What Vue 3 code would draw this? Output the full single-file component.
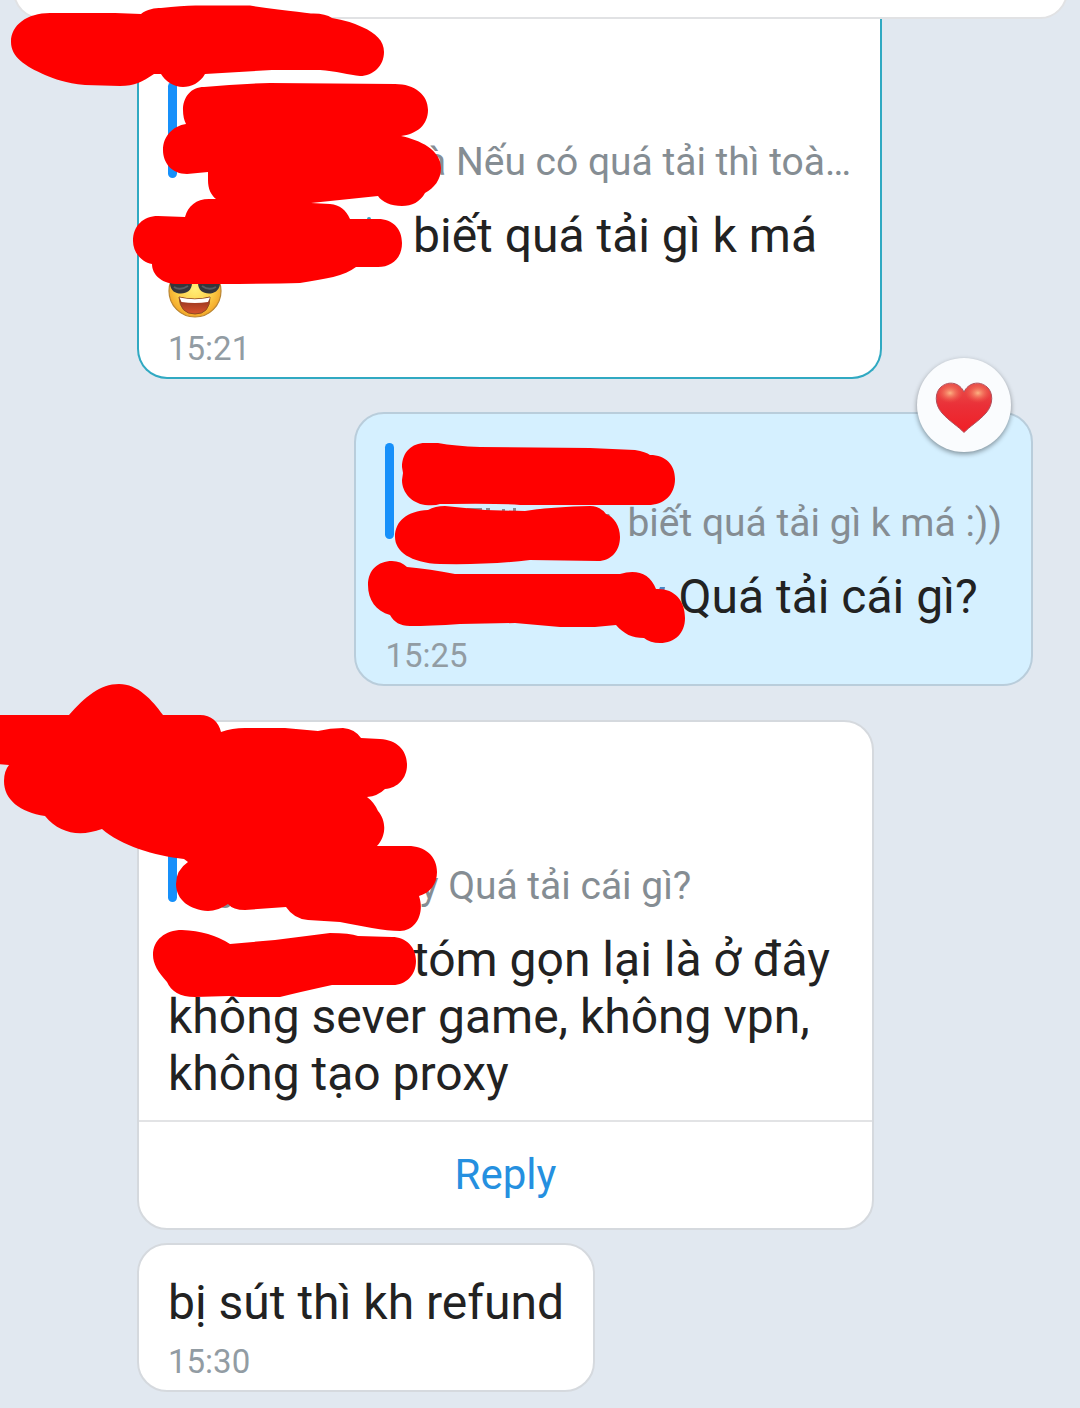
<script setup>
const marks = {
  first: [
    'M11,42 C11,25 27,13 50,13 L115,13 L141,14 C147,9 155,8 161,8 Q185,5 200,5.5 L250,5.5 Q265,8 278,9.5 Q300,12 311,13.5 Q325,13 332,18 Q350,21 362,27 C376,33 384,41 384,52 C384,66 373,76 360,76 C350,75 335,71 320,70 L272,70 L205,74 C200,83 191,87 183,87 C174,87 165,81 161,74 L154,74 C142,82 135,86 120,86 L85,85 C65,83 55,79 45,75 C25,66 11,57 11,42Z',
    'M183,110 C183,97 191,87 204,87 Q235,84 270,83 L395,84 C415,84 428,95 428,110 C428,125 417,134 401,136 C420,140 441,150 441,168 C441,180 434,188 425,193 C420,202 412,206 402,206 C391,206 382,202 378,196 L311,203 L330,204 C340,205 346,210 350,219 L378,219 C393,219 402,229 402,243 C402,258 392,267 378,267 L356,267 C345,276 325,279 300,283 Q265,284 175,284 C162,283 152,275 152,264 C141,262 133,252 133,241 C133,226 143,216 158,216 L185,217 C188,206 196,199 209,199 L216,199 C211,195 208,189 208,180 L208,172 L187,174 C172,174 163,163 163,150 C163,136 173,126 186,124 Q183,118 183,110Z',
  ],
  second: [
    'M402,467 C402,452 412,443 425,443 L438,443 Q455,446 480,447 L590,448 L635,450 Q646,452 650,455 C666,455 675,465 675,479 C675,495 664,505 648,505 L520,505 Q500,503 440,504 Q435,506 425,505 C412,503 402,493 402,480 L403,473Z',
    'M395,537 C395,521 407,511 428,510 Q435,506 445,506 L485,510 L525,511 Q550,507 590,506 Q600,506 606,514 C614,517 620,526 620,537 C620,551 611,561 598,561 L530,560 Q490,565 440,564 C410,563 395,551 395,537Z',
    'M368,585 C368,570 378,561 392,561 Q401,561 407,567 Q430,569 455,574 L620,574 C636,569 650,573 656,589 C674,588 685,600 685,618 C685,633 675,643 660,643 Q650,643 644,638 C632,638 624,634 616,625 L595,627 L560,627 L515,623 L460,624 Q430,626 410,626 C400,626 394,622 390,615 C376,611 368,600 368,585Z',
  ],
  third: [
    'M-2,715 L69,715 C85,697 100,684 119,684 C138,684 152,700 163,715 L200,715 C211,715 219,722 221,732 Q232,728 245,728 L285,728 L318,731 Q330,728 343,728 Q355,729 361,738 L380,739 C397,740 407,750 407,765 C407,778 398,788 385,789 Q378,796 367,797 Q374,802 378,811 C386,820 387,835 377,846 L408,846 C425,846 437,856 437,872 C437,884 430,893 419,896 C425,913 416,931 400,931 C385,931 360,926 340,922 L308,920 Q294,919 286,907 L245,910 Q233,910 228,904 Q218,911 208,911 C190,910 176,900 176,884 Q176,870 188,862 L184,859 C155,856 120,845 102,829 C80,837 60,834 45,816 C20,812 4,800 4,781 Q4,771 9,765 L-2,764Z',
    'M153,955 C153,940 165,930 182,930 Q210,931 230,944 L275,940 L330,933 Q350,933 358,936 L392,937 C406,937 416,947 416,961 C416,975 406,985 393,985 L332,985 Q300,992 280,997 L240,997 L229,996 L195,997 C180,997 171,991 167,982 C158,972 153,964 153,955Z',
  ],
}
</script>

<template>
  <main class="chat">
    <header class="sheet-wrap"><div class="sheet"></div></header>

    <article class="bubble selected">
      <blockquote class="quote">
        <p><span class="hidden q1"></span>à Nếu có quá tải thì toà…</p>
      </blockquote>
      <p class="text"><span class="hidden t1"></span>biết quá tải gì k má</p>
      <div class="emoji-line">
        <svg class="emoji" viewBox="0 0 54 54" aria-label="Laughing face with sunglasses">
          <defs>
            <radialGradient id="face" cx="50%" cy="45%" r="55%">
              <stop offset="0" stop-color="#fff07a" />
              <stop offset="0.6" stop-color="#fdd04a" />
              <stop offset="1" stop-color="#f3a526" />
            </radialGradient>
            <linearGradient id="mouth" x1="0" y1="0" x2="0" y2="1">
              <stop offset="0" stop-color="#8a2f1c" />
              <stop offset="1" stop-color="#d9532c" />
            </linearGradient>
          </defs>
          <circle cx="27" cy="27" r="26" fill="url(#face)" stroke="#b98532" stroke-width="1.2" />
          <path d="M2 13H52V20C51 27 46 29.500 41 29.500C35 29.500 30 26 30 19H24C24 26 19 29.500 13 29.500C7 29.500 3 27 2 20Z" fill="#34363b" />
          <path d="M6 23Q12 27 20 22M34 22Q41 27 48 23" fill="none" stroke="#595b61" stroke-width="2" />
          <path d="M11 33Q27 37 42 33Q42 50 27 50Q12 50 11 33Z" fill="url(#mouth)" stroke="#8f4a20" />
          <path d="M11.500 33.500Q27 37 42 33.500L40 38Q27 40 13.500 38Z" fill="#fff" />
        </svg>
      </div>
      <time class="time">15:21</time>
      <svg class="marks" viewBox="139 19 10 10" aria-hidden="true">
        <circle cx="369" cy="219" r="2" fill="#3c9dbd" />
        <path v-for="d in marks.first" :key="d" :d="d" />
      </svg>
    </article>

    <article class="bubble own">
      <blockquote class="quote">
        <p><span class="hidden q2"></span>biết quá tải gì k má :))</p>
      </blockquote>
      <p class="text"><span class="hidden t2"></span>Quá tải cái gì?</p>
      <time class="time">15:25</time>
      <svg class="marks" viewBox="356 414 10 10" aria-hidden="true">
        <path class="grey" d="M467 508h15v3h-15zM486 508h4v4h-4zM502 509h3v3h-3zM513 508h3v3h-3zM603 514h6l3 5h-6z" />
        <path fill="#4a86c4" d="M660 587h5l-1 5h-6z" />
        <path v-for="d in marks.second" :key="d" :d="d" />
      </svg>
      <button class="reaction" type="button" aria-label="Love">
        <svg viewBox="0 0 58 52" aria-hidden="true">
          <defs>
            <linearGradient id="heart" x1="0" y1="0" x2="0" y2="1">
              <stop offset="0" stop-color="#e8514a" />
              <stop offset="0.450" stop-color="#ea3038" />
              <stop offset="1" stop-color="#f01f26" />
            </linearGradient>
            <radialGradient id="shine">
              <stop offset="0" stop-color="#ffc08a" stop-opacity="0.900" />
              <stop offset="1" stop-color="#f4604f" stop-opacity="0" />
            </radialGradient>
          </defs>
          <path d="M29 50.500C24 45 14 39 7 31C-1 22 0 10 6 5C14 -2 25 1 29 10C33 1 44 -2 52 5C58 10 59 22 51 31C44 39 34 45 29 50.500Z" fill="url(#heart)" stroke="#b0505c" />
          <ellipse cx="15" cy="11" rx="13" ry="10" fill="url(#shine)" />
          <ellipse cx="43" cy="11" rx="13" ry="10" fill="url(#shine)" />
        </svg>
      </button>
    </article>

    <article class="bubble named">
      <blockquote class="quote">
        <p><span class="hidden q3"></span>y Quá tải cái gì?</p>
      </blockquote>
      <p class="text"><span class="hidden t3"></span>tóm gọn lại là ở đây<br />không sever game, không vpn,<br />không tạo proxy</p>
      <button class="reply" type="button">Reply</button>
      <svg class="marks" viewBox="139 722 10 10" aria-hidden="true">
        <path class="grey" d="M220 904h11q-1 4-6 4t-5-4z" />
        <path v-for="d in marks.third" :key="d" :d="d" />
      </svg>
    </article>

    <article class="bubble last">
      <p class="text">bị sút thì kh refund</p>
      <time class="time">15:30</time>
    </article>
  </main>
</template>

<style>
body {
  margin: 0;
  background: #e1e8f0;
}
</style>

<style scoped>
.chat {
  display: flex;
  flex-direction: column;
  align-items: flex-start;
  min-height: 100vh;
  padding: 0 47px 0 137px;
  box-sizing: border-box;
  overflow: hidden;
  background: #e1e8f0;
  font-family: Roboto, sans-serif;
  color: #222;
}
.sheet-wrap {
  align-self: stretch;
  height: 19px;
  margin: 0 -35px 0 -124px;
  display: flex;
  align-items: flex-end;
}
.sheet {
  flex: 1;
  height: 60px;
  box-sizing: border-box;
  background: #fff;
  border: 2px solid #e1e2e4;
  border-radius: 28px;
}
.bubble {
  position: relative;
  box-sizing: border-box;
  padding: 29px 29px 8px;
  background: #fff;
  border: 2px solid #d5d9de;
  border-radius: 30px;
}
.selected {
  padding-top: 63px;
  border-color: #30a9c2;
  border-top: 0;
  border-radius: 0 0 30px 30px;
}
.own {
  align-self: flex-end;
  margin: 33px 0 34px;
  background: #d5f0ff;
  border-color: #b9cddb;
}
.named {
  width: 737px;
  padding: 84px 29px 0;
}
.last {
  margin-top: 13px;
}
.quote {
  display: flex;
  flex-direction: column;
  justify-content: flex-end;
  height: 96px;
  margin: 0 0 29px;
  position: relative;
}
.quote::before {
  content: '';
  position: absolute;
  left: 0;
  top: 0;
  width: 9px;
  height: 96px;
  border-radius: 5px;
  background: #1690fa;
}
.quote p {
  margin: 0;
  font-size: 39px;
  line-height: 32px;
  color: #858d93;
  white-space: nowrap;
}
.text {
  margin: 0;
  font-size: 48px;
  line-height: 57px;
  white-space: nowrap;
}
.hidden {
  display: inline-block;
}
.q1 { width: 257px; }
.q2 { width: 242px; }
.q3 { width: 252px; }
.t1 { width: 245px; }
.t2 { width: 293px; }
.t3 { width: 245px; }
.emoji-line {
  height: 54px;
  display: flex;
  align-items: center;
}
.emoji {
  width: 54px;
  height: 54px;
}
.time {
  display: block;
  margin-top: 11px;
  font-size: 33px;
  line-height: 40px;
  color: #929ca3;
}
.marks {
  position: absolute;
  left: 0;
  top: 0;
  width: 10px;
  height: 10px;
  overflow: visible;
  fill: #f00;
  pointer-events: none;
}
.grey {
  fill: #858d93;
}
.reaction {
  position: absolute;
  right: 20px;
  top: -56px;
  width: 94px;
  height: 94px;
  padding: 6px 0 0;
  display: flex;
  align-items: center;
  justify-content: center;
  border: 0;
  border-radius: 50%;
  background: #fafcfe;
  box-shadow: 0 2px 5px #0006;
}
.reaction svg {
  width: 58px;
  height: 52px;
}
.reply {
  display: block;
  width: calc(100% + 58px);
  height: 108px;
  margin: 18px -29px 0;
  border: 0;
  border-top: 2px solid #e2e3e5;
  background: none;
  font-family: inherit;
  font-size: 42px;
  line-height: 48px;
  color: #2590e0;
}
</style>
